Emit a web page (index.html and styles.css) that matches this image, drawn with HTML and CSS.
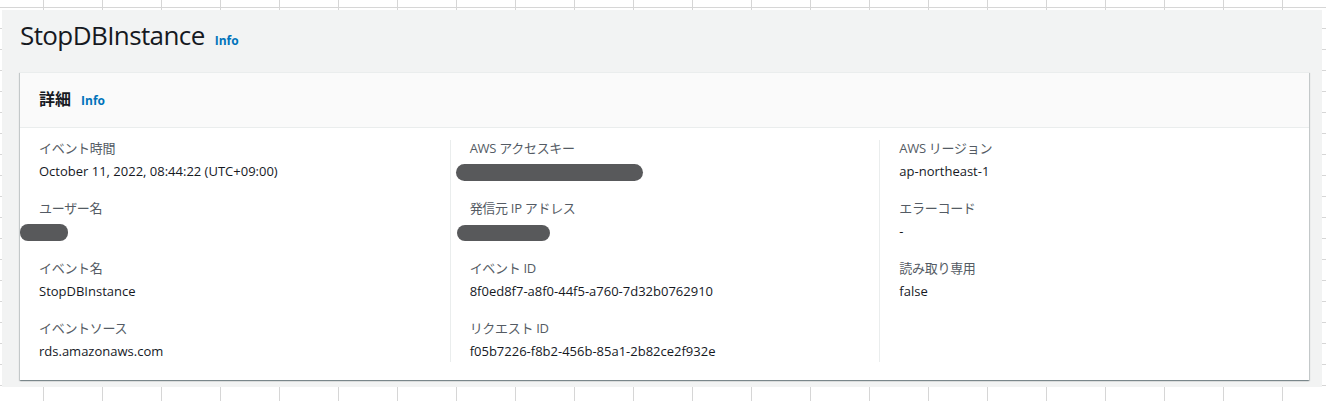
FILE: index.html
```html
<!DOCTYPE html>
<html lang="ja">
<head>
<meta charset="utf-8">
<title>StopDBInstance</title>
<link rel="stylesheet" href="styles.css">
</head>
<body>
<div class="sheet">
  <main class="page">
    <header class="page-header">
      <h1 class="page-title">StopDBInstance</h1>
      <a class="info-link info-lg" href="#">Info</a>
    </header>
    <section class="card">
      <div class="card-header">
        <h2 class="card-title">詳細</h2>
        <a class="info-link" href="#">Info</a>
      </div>
      <div class="card-body">
        <div class="col">
          <div class="kv">
            <div class="kv-label">イベント時間</div>
            <div class="kv-value">October 11, 2022, 08:44:22 (UTC+09:00)</div>
          </div>
          <div class="kv">
            <div class="kv-label">ユーザー名</div>
            <div class="kv-value"><span class="redact redact-user"></span></div>
          </div>
          <div class="kv">
            <div class="kv-label">イベント名</div>
            <div class="kv-value">StopDBInstance</div>
          </div>
          <div class="kv">
            <div class="kv-label">イベントソース</div>
            <div class="kv-value">rds.amazonaws.com</div>
          </div>
        </div>
        <div class="col col-div">
          <div class="kv">
            <div class="kv-label">AWS アクセスキー</div>
            <div class="kv-value"><span class="redact redact-key"></span></div>
          </div>
          <div class="kv">
            <div class="kv-label">発信元 IP アドレス</div>
            <div class="kv-value"><span class="redact redact-ip"></span></div>
          </div>
          <div class="kv">
            <div class="kv-label">イベント ID</div>
            <div class="kv-value">8f0ed8f7-a8f0-44f5-a760-7d32b0762910</div>
          </div>
          <div class="kv">
            <div class="kv-label">リクエスト ID</div>
            <div class="kv-value">f05b7226-f8b2-456b-85a1-2b82ce2f932e</div>
          </div>
        </div>
        <div class="col col-div">
          <div class="kv">
            <div class="kv-label">AWS リージョン</div>
            <div class="kv-value">ap-northeast-1</div>
          </div>
          <div class="kv">
            <div class="kv-label">エラーコード</div>
            <div class="kv-value">-</div>
          </div>
          <div class="kv">
            <div class="kv-label">読み取り専用</div>
            <div class="kv-value">false</div>
          </div>
        </div>
      </div>
    </section>
  </main>
</div>
</body>
</html>
```

FILE: styles.css
```css
* { box-sizing: border-box; }

html, body {
  margin: 0;
  padding: 0;
}

body {
  width: 1326px;
  height: 401px;
  overflow: hidden;
  font-family: "Open Sans", "Noto Sans CJK JP", sans-serif;
  color: #16191f;
  background-color: #ffffff;
  background-image:
    linear-gradient(to right, #d6d6d6 1px, transparent 1px),
    linear-gradient(to bottom, #d6d6d6 1px, transparent 1px);
  background-size: 59px 21px;
  background-position: 43px 7px;
}

.sheet {
  padding: 10px 4px 14px 2px;
}

.page {
  background: #f2f3f3;
  padding: 0 13px 7px 18px;
  height: 377px;
}

.page-header {
  display: flex;
  align-items: baseline;
  height: 62px;
  padding-top: 8px;
}

.page-title {
  margin: 0;
  font-size: 26px;
  font-weight: 400;
  line-height: 34px;
  color: #16191f;
  letter-spacing: -0.6px;
}

.info-link {
  color: #0073bb;
  font-size: 12px;
  font-weight: 700;
  text-decoration: none;
}

.info-lg { margin-left: 10px; }

.card {
  background: #ffffff;
  border-top: 1px solid #eaeded;
  box-shadow: 0 1px 1px 0 rgba(0, 28, 36, 0.3),
              1px 1px 1px 0 rgba(0, 28, 36, 0.15),
              -1px 1px 1px 0 rgba(0, 28, 36, 0.15);
}

.card-header {
  display: flex;
  align-items: baseline;
  background: #fafafa;
  border-bottom: 1px solid #eaeded;
  height: 55px;
  padding: 14px 19px 0;
}

.card-title {
  margin: 0;
  font-size: 16px;
  font-weight: 700;
  line-height: 24px;
  color: #16191f;
}

.card-header .info-link { margin-left: 10px; }

.card-body {
  display: grid;
  grid-template-columns: 1fr 1fr 1fr;
  padding: 9px 0 18px;
}

.col {
  padding: 0 19px;
}

.col-div {
  border-left: 1px solid #eaeded;
  margin-top: 3px;
}

.col-div .kv:first-child { margin-top: -3px; }

.kv { margin-bottom: 15px; }
.kv:last-child { margin-bottom: 0; }

.kv-label {
  font-size: 13px;
  line-height: 22px;
  color: #545b64;
  margin-bottom: 1px;
  letter-spacing: -0.3px;
}

.kv-value {
  font-size: 13px;
  line-height: 22px;
  color: #16191f;
  height: 22px;
}

.redact {
  display: inline-block;
  vertical-align: middle;
  background: #58595b;
  border-radius: 8px;
  height: 17px;
}

.redact-user { width: 48px; margin-left: -19px; margin-top: -1px; }
.redact-key { width: 187px; margin-left: -14px; height: 17px; border-radius: 9px; }
.redact-ip { width: 93px; margin-left: -13px; height: 16px; }
```
